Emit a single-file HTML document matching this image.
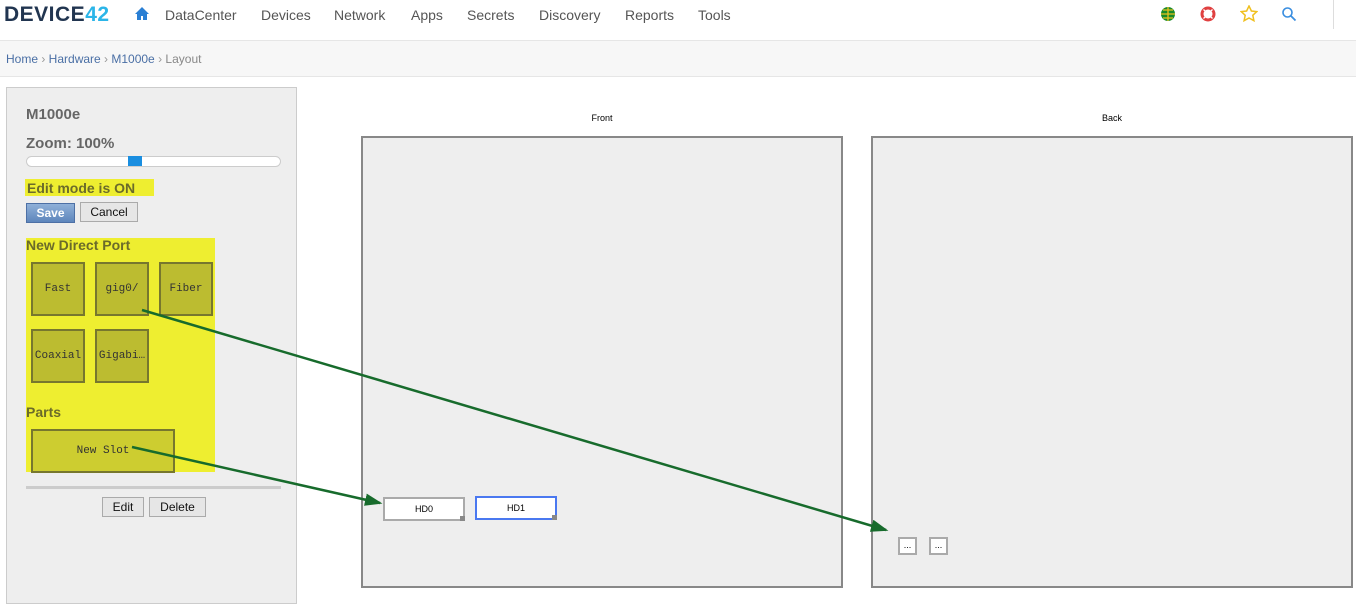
<!DOCTYPE html>
<html><head><style>
body{margin:0;width:1356px;height:595px;overflow:hidden;background:#fff;font-family:"Liberation Sans",sans-serif;position:relative}
.a{position:absolute}
.nav a{position:absolute;top:7px;font-size:14px;color:#555;}
.mono{font-family:"Liberation Mono",monospace;font-size:11px;color:#333}
.tile{position:absolute;background:#bcbc30;border:2px solid #77772e;display:flex;align-items:center;justify-content:center;box-sizing:border-box;width:54px;height:54px;white-space:nowrap;overflow:hidden}
.btn{position:absolute;background:#e6e6e6;border:1px solid #aaa;font-size:12px;color:#111;text-align:center;line-height:18px;height:18px}
</style></head><body>
<div class="a" style="left:4px;top:3px;font-size:21px;font-weight:bold;letter-spacing:0.5px;color:#213550">DEVICE<span style="color:#2bb5e8">42</span></div>
<svg class="a" style="left:134px;top:6px" width="16" height="15" viewBox="0 0 16 15"><path d="M8 1L1 8h2v6h4v-4h2v4h4V8h2z" fill="#2a7fd4"/></svg>
<div class="nav">
<a style="left:165px">DataCenter</a><a style="left:261px">Devices</a><a style="left:334px">Network</a><a style="left:411px">Apps</a><a style="left:467px">Secrets</a><a style="left:539px">Discovery</a><a style="left:625px">Reports</a><a style="left:698px">Tools</a></div>
<svg class="a" style="left:1160px;top:6px" width="16" height="16"><circle cx="8" cy="8" r="7" fill="#1a8a2a"/><path d="M1 8h14M8 1v14M3 4h10M3 12h10" stroke="#e8c020" stroke-width="1.3"/></svg>
<svg class="a" style="left:1200px;top:6px" width="16" height="16"><circle cx="8" cy="8" r="6" fill="none" stroke="#e04040" stroke-width="3"/><path d="M3.5 3.5l2.5 2.5M12.5 3.5L10 6M3.5 12.5L6 10M12.5 12.5L10 10" stroke="#fff" stroke-width="1.3"/></svg>
<svg class="a" style="left:1240px;top:5px" width="18" height="17"><path d="M9 1l2.4 5 5.4.6-4 3.7 1.1 5.4L9 13l-4.9 2.7 1.1-5.4-4-3.7 5.4-.6z" fill="none" stroke="#f0c020" stroke-width="1.5"/></svg>
<svg class="a" style="left:1281px;top:6px" width="16" height="16"><circle cx="6.5" cy="6.5" r="4.5" fill="none" stroke="#3a8ee0" stroke-width="1.6"/><path d="M10 10l4.5 4.5" stroke="#3a8ee0" stroke-width="1.8"/></svg>
<div class="a" style="left:1333px;top:0;width:1px;height:29px;background:#ddd"></div>
<div class="a" style="left:0;top:40px;width:1356px;height:35px;background:#f7f7f7;border-top:1px solid #e6e6e6;border-bottom:1px solid #e6e6e6"></div>
<div class="a" style="left:6px;top:52px;font-size:12px;color:#4a6fa5">Home <span style="color:#999">›</span> Hardware <span style="color:#999">›</span> M1000e <span style="color:#999">›</span> <span style="color:#888">Layout</span></div>

<div class="a" style="left:6px;top:87px;width:289px;height:515px;background:#eee;border:1px solid #ccc"></div>
<div class="a" style="left:26px;top:106px;font-size:15px;font-weight:bold;color:#666">M1000e</div>
<div class="a" style="left:26px;top:135px;font-size:15px;font-weight:bold;color:#666">Zoom: 100%</div>
<div class="a" style="left:26px;top:156px;width:253px;height:9px;background:#fff;border:1px solid #ccc;border-radius:6px"></div>
<div class="a" style="left:128px;top:156px;width:14px;height:10px;background:#1a8ee0"></div>
<div class="a" style="left:25px;top:179px;width:129px;height:17px;background:#eeee30"></div>
<div class="a" style="left:27px;top:180px;font-size:14px;font-weight:bold;color:#6b6b2a">Edit mode is ON</div>
<div class="a" style="left:26px;top:203px;width:47px;height:18px;background:linear-gradient(#8fb0d8,#5e86bc);border:1px solid #4d70a5;color:#fff;font-weight:bold;font-size:12px;text-align:center;line-height:18px">Save</div>
<div class="btn" style="left:80px;top:202px;width:56px">Cancel</div>
<div class="a" style="left:26px;top:238px;width:189px;height:234px;background:#eeee30"></div>
<div class="a" style="left:26px;top:237px;font-size:14px;font-weight:bold;color:#6b6b2a">New Direct Port</div>
<div class="tile mono" style="left:31px;top:262px">Fast</div>
<div class="tile mono" style="left:95px;top:262px">gig0/</div>
<div class="tile mono" style="left:159px;top:262px">Fiber</div>
<div class="tile mono" style="left:31px;top:329px">Coaxial</div>
<div class="tile mono" style="left:95px;top:329px">Gigabi…</div>
<div class="a" style="left:26px;top:404px;font-size:14px;font-weight:bold;color:#6b6b2a">Parts</div>
<div class="tile mono" style="left:31px;top:429px;width:144px;height:44px;background:#cdcd30">New Slot</div>
<div class="a" style="left:26px;top:486px;width:255px;height:3px;background:#ccc"></div>
<div class="btn" style="left:102px;top:497px;width:40px">Edit</div>
<div class="btn" style="left:149px;top:497px;width:55px">Delete</div>

<div class="a" style="left:361px;top:113px;width:482px;text-align:center;font-size:9px">Front</div>
<div class="a" style="left:871px;top:113px;width:482px;text-align:center;font-size:9px">Back</div>
<div class="a" style="left:361px;top:136px;width:478px;height:448px;background:#eee;border:2px solid #888"></div>
<div class="a" style="left:871px;top:136px;width:478px;height:448px;background:#eee;border:2px solid #888"></div>
<div class="a" style="left:383px;top:497px;width:78px;height:20px;background:#fff;border:2px solid #aaa;font-size:9px;text-align:center;line-height:20px">HD0</div>
<div class="a" style="left:475px;top:496px;width:78px;height:20px;background:#fff;border:2px solid #4a78f0;font-size:9px;text-align:center;line-height:20px">HD1</div>
<div class="a" style="left:460px;top:516px;width:5px;height:5px;background:#888"></div>
<div class="a" style="left:552px;top:515px;width:5px;height:5px;background:#888"></div>
<div class="a" style="left:898px;top:537px;width:15px;height:14px;background:#fff;border:2px solid #aaa;font-size:9px;text-align:center;line-height:13px">...</div>
<div class="a" style="left:929px;top:537px;width:15px;height:14px;background:#fff;border:2px solid #aaa;font-size:9px;text-align:center;line-height:13px">...</div>
<svg class="a" style="left:0;top:0" width="1356" height="595">
<defs><marker id="m" markerWidth="7" markerHeight="5" refX="6" refY="2.5" orient="auto" markerUnits="strokeWidth"><path d="M0 0L7 2.5L0 5z" fill="#176b2c"/></marker></defs>
<line x1="142" y1="310" x2="886" y2="530" stroke="#176b2c" stroke-width="2.5" marker-end="url(#m)"/>
<line x1="132" y1="447" x2="380" y2="503" stroke="#176b2c" stroke-width="2.5" marker-end="url(#m)"/>
</svg>
</body></html>
